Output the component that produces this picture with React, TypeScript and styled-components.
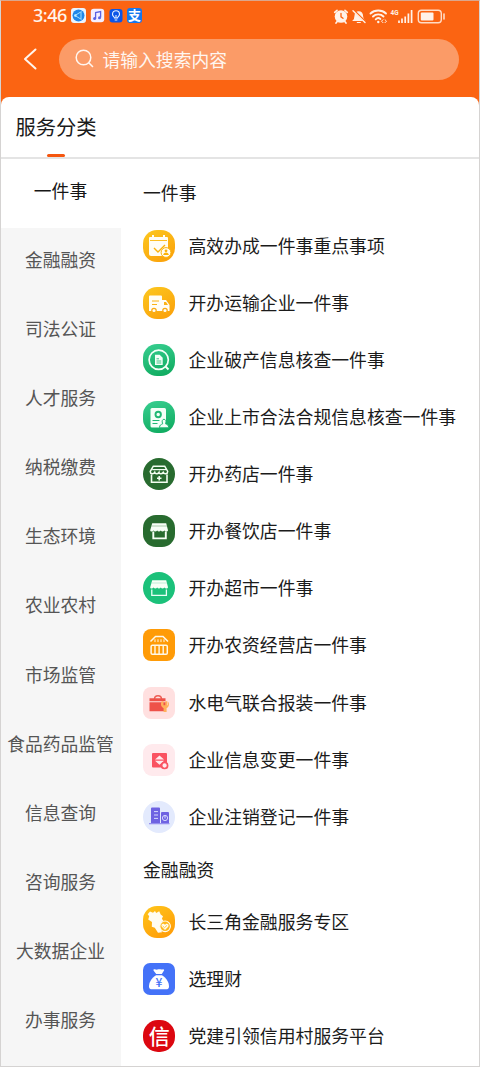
import React from 'react';
import styled, { createGlobalStyle } from 'styled-components';

const GlobalStyle = createGlobalStyle`
  *, *::before, *::after { box-sizing: border-box; }
  body { margin: 0; background: #fff; }
`;

const Screen = styled.div`
  width: 480px;
  height: 1067px;
  overflow: hidden;
  display: flex;
  flex-direction: column;
  background: #fb6412;
  border: 1px solid #d5d3d2;
  border-top-color: #dba68c;
  font-family: 'Noto Sans CJK SC', 'Noto Sans', sans-serif;
  color: #1b1b1b;
`;

const StatusBar = styled.header`
  display: flex;
  align-items: center;
  height: 29px;
  padding: 0 33px 0 31px;
`;

const Clock = styled.span`
  width: 39px;
  padding-left: 1px;
  font: 500 18px/28px 'Noto Sans', sans-serif;
  letter-spacing: -0.5px;
  color: #fff4ec;
  position: relative;
  top: -1px;
`;

const AppBadges = styled.div`
  display: flex;
  gap: 4px;
`;

const Signals = styled.div`
  margin-left: auto;
  display: flex;
  align-items: center;
`;

const SearchRow = styled.div`
  display: flex;
  align-items: center;
  height: 67px;
  padding: 0 20px 9px 22px;
`;

const BackButton = styled.button`
  width: 36px;
  height: 40px;
  padding: 0;
  border: 0;
  background: none;
  display: flex;
  align-items: center;
`;

const SearchBox = styled.div`
  flex: 1;
  height: 41px;
  border-radius: 21px;
  background: #fb9b67;
  display: flex;
  align-items: center;
  gap: 9px;
  padding: 0 0 1px 15.5px;
  font-size: 17.8px;
  line-height: 38px;
  color: #fff6f0;
`;

const Sheet = styled.main`
  flex: 1;
  min-height: 0;
  display: flex;
  flex-direction: column;
  background: #fff;
  border-radius: 8px 8px 0 0;
  overflow: hidden;
`;

const TabBar = styled.div`
  flex: none;
  height: 62px;
  padding: 14px 14px 0;
  border-bottom: 2px solid #e4e4e4;
`;

const Tab = styled.div`
  width: 82px;
  height: 46px;
  display: flex;
  flex-direction: column;
  align-items: center;
  justify-content: space-between;
  white-space: nowrap;
  font-size: 20.3px;
  line-height: 30px;
  color: #1a1a1a;

  &::after {
    content: '';
    width: 18px;
    height: 3px;
    border-radius: 2px;
    background: #f5560f;
  }
`;

const Columns = styled.div`
  flex: 1;
  min-height: 0;
  display: flex;
`;

const Sidebar = styled.nav`
  flex: none;
  width: 120px;
  background: #f6f6f6;
`;

const Category = styled.div<{ $active?: boolean }>`
  height: 69.15px;
  display: flex;
  align-items: center;
  justify-content: center;
  white-space: nowrap;
  padding: 0 1px 8px 0;
  font-size: 17.8px;
  background: ${p => (p.$active ? '#fff' : 'transparent')};
  color: ${p => (p.$active ? '#161616' : '#555')};
`;

const Services = styled.section`
  flex: 1;
  padding-left: 22px;
  overflow: hidden;
`;

const GroupTitle = styled.h2<{ $first?: boolean }>`
  margin: 0;
  height: ${p => (p.$first ? 58 : 48)}px;
  padding-top: ${p => (p.$first ? 19 : 10)}px;
  font-size: 17.85px;
  font-weight: 400;
  line-height: 28px;
`;

const ServiceRow = styled.div`
  height: 57.13px;
  display: flex;
  align-items: center;
  gap: 13.5px;
  white-space: nowrap;
  font-size: 17.85px;
  line-height: 28px;
`;

const ServiceName = styled.span`
  padding-bottom: 2px;
`;

const Tile = styled.svg`
  flex: none;
  display: block;
  width: 32px;
  height: 32px;
  overflow: visible;
`;

const Gradients = styled.svg`
  position: absolute;
  width: 0;
  height: 0;
`;

type TileProps = { fill: string; r: number; children: React.ReactNode };
const IconTile = ({ fill, r, children }: TileProps) => (
  <Tile viewBox="0 0 32 32" fill="none">
    <rect width="32" height="32" rx={r} fill={fill} />
    {children}
  </Tile>
);

const CalendarIcon = () => (
  <IconTile fill="url(#gold)" r={14}>
    <path d="M7 7h17a1 1 0 0 1 1 1v17a1 1 0 0 1-1 1H8a2 2 0 0 1-2-2V8a1 1 0 0 1 1-1z" fill="#fffdf5" />
    <path d="M10 5v4M21 5v4" stroke="#fffdf5" strokeWidth="2" />
    <path d="M7 10.5h17" stroke="#fdbf24" strokeWidth="1" />
    <path d="m11 18 4 4 7-7" stroke="#fbb20b" strokeWidth="1.4" />
    <circle cx="23" cy="22.5" r="4.9" fill="#fffdf5" stroke="#fbb20b" />
    <circle cx="23" cy="20.8" r="1.4" fill="#fbb20b" />
    <path d="M20.2 25c0-3.5 5.6-3.5 5.6 0z" fill="#fbb20b" />
  </IconTile>
);

const TruckIcon = () => (
  <IconTile fill="url(#gold)" r={14}>
    <path d="M7 8.500h11a1 1 0 0 1 1 1V13h4l3.500 5v6H6V9.500a1 1 0 0 1 1-1z" fill="#fffdf5" />
    <path d="M9 14h7M9 17.500h5" stroke="#fbb216" strokeWidth="1" />
    <path d="M21 15h2l2 3h-4z" fill="#fbb216" />
    <circle cx="11" cy="23.500" r="2.200" fill="#fffdf5" stroke="#fbaa10" strokeWidth="1.200" />
    <circle cx="22" cy="23.500" r="2.200" fill="#fffdf5" stroke="#fbaa10" strokeWidth="1.200" />
  </IconTile>
);

const AuditIcon = () => (
  <IconTile fill="url(#mint)" r={14}>
    <circle cx="15.7" cy="15.8" r="9.6" stroke="#f4fff8" strokeWidth="1.7" />
    <path d="m22.5 22.5 3 3" stroke="#f4fff8" strokeWidth="2" />
    <path d="M12 10.7h4.7l3 3V21H12z" fill="#f4fff8" />
    <path d="M13.5 14.8h2.5M13.5 17h4.8M13.5 19h4.8" stroke="#26bd79" strokeWidth="0.9" />
  </IconTile>
);

const ListingIcon = () => (
  <IconTile fill="url(#mint)" r={14}>
    <rect x="7.500" y="7" width="15.500" height="19.500" rx="1.500" fill="#f4fff8" />
    <circle cx="15.200" cy="13.500" r="2.700" stroke="#20b874" strokeWidth="1.900" />
    <path d="M9.500 19.500h7M9.500 22.500h5" stroke="#20b874" strokeWidth="1.100" />
    <path d="M16.500 26.800c0-3 1.700-3.300 3.200-4-2.700-6 5.300-6 2.800 0 1.500.7 3.200 1 3.200 4z" fill="#f4fff8" stroke="#20b874" />
  </IconTile>
);

const PharmacyIcon = () => (
  <IconTile fill="#286b2f" r={16}>
    <path d="M10.300 8.200h11.400l3 5.300c0 2.700-3.500 3-4.500.8-1.300 2-4 2-4.200 0-1.300 2-3.800 2-4.300 0-1.200 2.100-4.500 1.800-4.500-.8z" stroke="#f4fff2" strokeWidth="1.500" />
    <path d="M9.200 11.600h14" stroke="#f4fff2" strokeWidth="1.200" />
    <path d="M8.500 16.500v7.800H24v-7.800" stroke="#f4fff2" strokeWidth="1.600" />
    <path d="M16.200 18v4.500M14 20.200h4.500" stroke="#f4fff2" strokeWidth="1.500" />
  </IconTile>
);

const Shop = ({ cut }: { cut: string }) => (
  <>
    <path d="M9.200 8.200h14l1.800 7c0 1.600-2.600 2-3.600.4-1 1.300-2.800 1.300-3.600 0-1 1.300-2.800 1.300-3.600 0-1 1.300-2.800 1.300-3.600 0-1.200 1.600-3.500 1.200-3.400-.4z" fill="#f7fff7" />
    <path d="M8.300 11h15.800" stroke={cut} strokeWidth="0.6" />
  </>
);

const RestaurantIcon = () => (
  <IconTile fill="#286b2f" r={13}>
    <Shop cut="#77a67b" />
    <path d="M10.300 16.500v6.900h12.500v-6.900" stroke="#f7fff7" strokeWidth="1.900" />
  </IconTile>
);

const MarketIcon = () => (
  <IconTile fill="#1bc17a" r={16}>
    <Shop cut="#9ce3c3" />
    <path d="M8.800 17.500v5.900h14.600v-5.900" stroke="#eafff5" strokeWidth="1.300" />
  </IconTile>
);

const FarmStoreIcon = () => (
  <IconTile fill="#ff9b07" r={8}>
    <path d="m7.500 12.500 5-5h7.500l5 5" stroke="#fff8e8" strokeWidth="1.500" />
    <path d="M12 10.300v2.800M15 10.300v2.800M18 10.300v2.800M21 10.300v2.800" stroke="#fff8e8" strokeWidth="1" />
    <rect x="8.100" y="16.300" width="16.200" height="9" rx="1.300" stroke="#fff8e8" strokeWidth="1.500" />
    <path d="M12 17v8M16.100 17v8M20.200 17v8" stroke="#fff8e8" strokeWidth="1.400" />
  </IconTile>
);

const UtilityIcon = () => (
  <IconTile fill="#ffe0e0" r={8}>
    <path d="M11.500 12c0-4.400 7-4.400 7 0" stroke="#ee5d53" strokeWidth="1.400" />
    <path d="M6.500 11.300h16v3h-16zM6.500 15.200H23v9H6.500z" fill="#ee5149" />
    <path d="M18.800 14.200h1.700v4h1.800v-4h1.800v4h.600l-.1-4c2 1.500 2 5.500-1 7V25h-3v-3.800c-2.800-1.500-3.300-5-1.800-7z" fill="#ffb05b" />
  </IconTile>
);

const ChangeIcon = () => (
  <IconTile fill="#ffeaed" r={9}>
    <rect x="9" y="9" width="15" height="14.500" rx="1" fill="#fa5361" />
    <path d="m12 15.600 4.500-4.200 4.500 4.200zM12 16.800l4.500 4 4.500-4z" fill="#ffeaed" />
    <circle cx="21.600" cy="21.500" r="3" fill="#ffeaed" stroke="#fa5361" strokeWidth="1.700" />
  </IconTile>
);

const CancelIcon = () => (
  <IconTile fill="#e3eafd" r={16}>
    <path d="M8 7.500a1 1 0 0 1 1-1h7a1 1 0 0 1 1 1v14.700H8zM18 12a1 1 0 0 1 1-1h6a1 1 0 0 1 1 1v10.200h-8z" fill="#6e62e2" />
    <path d="M6 22.700h20.500" stroke="#8c83ec" strokeWidth="1.100" />
    <path d="M11 10.600h4M11 14h4M11 17.400h4" stroke="#d7dafd" strokeWidth="1" />
    <circle cx="22" cy="17" r="2.600" stroke="#d7dafd" strokeWidth="1" />
    <path d="M22 14v3.500" stroke="#d7dafd" strokeWidth="1" />
  </IconTile>
);

const RegionIcon = () => (
  <IconTile fill="url(#amber)" r={14}>
    <path d="m7 5.400 3 1.400 2-1.900 1.200 2 3-1.700 1.500 3.200 2.300 1.800-1.100 2.500 1.400 2-2.100 1.500-.7 5.600 1.500 4.400-4 .5-3.200-4.900-3-1.100.2-4.600-3.800-2.600 1-3.200-1.500-2z" fill="#fffcf1" />
    <circle cx="22.100" cy="20.300" r="5.300" fill="#ffb91c" stroke="#fffcf1" strokeWidth="1.100" />
    <path d="m22 23.900-3.200-3.200c-1.500-2.500 2-4.300 3.200-1.700 1.200-2.600 4.800-.8 3.200 1.700z" fill="#fffcf1" />
    <path d="m19.700 20 1.800 1.700 2.700-2.500" stroke="#ffb91c" strokeWidth=".8" />
  </IconTile>
);

const MoneyBagIcon = () => (
  <IconTile fill="#4472f8" r={7}>
    <path d="M10.500 6.600c1.500-1 2.700.5 4 0 1.700-1.100 3.500.3 5.500-.4.900-.1 1.500.7 1 1.400L18.800 11h-5.600l-2.700-3.500z" fill="#fff" />
    <path d="M13 12.200h6c5 3.300 7 7.400 7 11.300 0 2.100-1.200 2.800-3.100 2.800H9.100C7.200 26.300 6 25.600 6 23.500c0-3.900 2-8 7-11.300z" fill="#fff" />
    <text x="16" y="24.300" textAnchor="middle" fontSize="12" fontWeight="500" fontFamily="Noto Sans CJK SC, sans-serif" fill="#4472f8">¥</text>
  </IconTile>
);

const CreditIcon = () => (
  <IconTile fill="#dc0710" r={15}>
    <text x="16.200" y="23.700" textAnchor="middle" fontSize="21" fontWeight="500" fontFamily="Noto Sans CJK SC, sans-serif" fill="#fff">信</text>
  </IconTile>
);

const categories = [
  '一件事', '金融融资', '司法公证', '人才服务', '纳税缴费', '生态环境', '农业农村',
  '市场监管', '食品药品监管', '信息查询', '咨询服务', '大数据企业', '办事服务',
];

const groups = [
  {
    title: '一件事',
    items: [
      { name: '高效办成一件事重点事项', Icon: CalendarIcon },
      { name: '开办运输企业一件事', Icon: TruckIcon },
      { name: '企业破产信息核查一件事', Icon: AuditIcon },
      { name: '企业上市合法合规信息核查一件事', Icon: ListingIcon },
      { name: '开办药店一件事', Icon: PharmacyIcon },
      { name: '开办餐饮店一件事', Icon: RestaurantIcon },
      { name: '开办超市一件事', Icon: MarketIcon },
      { name: '开办农资经营店一件事', Icon: FarmStoreIcon },
      { name: '水电气联合报装一件事', Icon: UtilityIcon },
      { name: '企业信息变更一件事', Icon: ChangeIcon },
      { name: '企业注销登记一件事', Icon: CancelIcon },
    ],
  },
  {
    title: '金融融资',
    items: [
      { name: '长三角金融服务专区', Icon: RegionIcon },
      { name: '选理财', Icon: MoneyBagIcon },
      { name: '党建引领信用村服务平台', Icon: CreditIcon },
    ],
  },
];

const BadgeIcon = styled.svg`
  display: block;
  overflow: visible;
`;

const StatusApps = () => (
  <AppBadges>
    <BadgeIcon width="15" height="15" viewBox="0 0 15 15" fill="none">
      <rect width="15" height="15" rx="3" fill="#e9f4ff" />
      <circle cx="7.500" cy="7.500" r="6" fill="#2187e8" />
      <path d="M10.500 3.500 4 7.500l6.500 4M10 4v7" stroke="#9fe0ff" strokeWidth="1" />
      <circle cx="4.300" cy="7.500" r="1.200" fill="#c5efff" />
    </BadgeIcon>
    <BadgeIcon width="15" height="15" viewBox="0 0 15 15" fill="none">
      <rect x=".8" y=".8" width="13.400" height="13.400" rx="3" fill="#f5efff" />
      <path d="M5.600 10.500V4.500l5-1v6" stroke="#5a62e4" strokeWidth="1.300" />
      <circle cx="4.600" cy="10.600" r="1.500" fill="#5a62e4" />
      <circle cx="9.500" cy="9.700" r="1.500" fill="#5a62e4" />
    </BadgeIcon>
    <BadgeIcon width="14" height="15" viewBox="0 0 14 15" fill="none">
      <rect x=".5" y="1" width="13" height="13.500" rx="3" fill="#0b55e8" />
      <path d="M5.500 10c0-1.300-2-1.700-2-3.800a3.500 3.500 0 0 1 7 0c0 2.100-2 2.500-2 3.800zM5.700 12h2.600M7 9.500V7" stroke="#e8f3ff" strokeWidth="1.100" />
    </BadgeIcon>
    <BadgeIcon width="15" height="15" viewBox="0 0 15 15">
      <rect width="15" height="15" rx="3" fill="#1478ee" />
      <text x="7.500" y="12.200" textAnchor="middle" fontSize="13" fontWeight="700" fontFamily="Noto Sans CJK SC, sans-serif" fill="#fff">支</text>
    </BadgeIcon>
  </AppBadges>
);

const StatusSignals = () => (
  <Signals>
    <svg width="113" height="18" viewBox="0 0 113 18" fill="none">
      <g stroke="#fff2e9" strokeLinecap="round">
        <circle cx="8" cy="9.500" r="6.300" fill="#fff2e9" stroke="none" />
        <path d="M1.700 5.300 4 3.300M12 3.300l2.300 2M4.200 14.500 3 16M11.800 14.500 13 16" strokeWidth="1.700" />
        <path d="M8 6.300v3.500l2 1.500" stroke="#fb6412" strokeWidth="1.300" />
        <path d="M20.700 13.300c2-1.800.6-5.600 2.300-7.300 1.400-1.500 4.100-1.500 5.500 0 1.700 1.700.3 5.500 2.400 7.300zM24.300 15.500h3" fill="#fff2e9" strokeWidth="1.200" />
        <path d="m20.500 3.300 12 11.800" stroke="#fb6412" strokeWidth="2.200" />
        <path d="m20 3.800 12 11.800" strokeWidth="1.400" />
        <path d="M37.500 6.500c4-4 11.500-4 15.500 0M40 9.500c2.800-2.800 7.700-2.800 10.500 0M42.700 12.300c1.500-1.500 3.200-1.500 4.700-.3" strokeWidth="1.900" />
        <circle cx="45.300" cy="15" r="1.200" fill="#fff2e9" stroke="none" />
        <path d="m50 12.700-1.500 1.500 1.500 1.500M52 12.700l1.500 1.500-1.500 1.500" strokeWidth="1" />
      </g>
      <text x="57.500" y="8" fontSize="7.500" fontWeight="700" textLength="8" lengthAdjust="spacingAndGlyphs" fontFamily="Roboto, sans-serif" fill="#fff2e9">4G</text>
      <path d="M66 13.500v2.500M69 11.500V16M72.200 9.500V16M75.400 6.500V16M78.600 3V16" stroke="#fff2e9" strokeWidth="1.700" />
      <rect x="85.300" y="3.300" width="23" height="12.400" rx="3.200" stroke="#ffdcc6" strokeWidth="1.400" />
      <rect x="87.800" y="5.500" width="12.700" height="8" rx="1" fill="#fff2e9" />
      <path d="M111 7v5" stroke="#ffdcc6" strokeWidth="1.600" strokeLinecap="round" />
    </svg>
  </Signals>
);

export default function App() {
  return (
    <Screen>
      <GlobalStyle />
      <Gradients>
        <defs>
          <linearGradient id="gold" x1="0" y1="0" x2="0.6" y2="1">
            <stop stopColor="#fcc81f" /><stop offset="1" stopColor="#fba40c" />
          </linearGradient>
          <linearGradient id="amber" x1="0" y1="0" x2="0.6" y2="1">
            <stop stopColor="#ffc61b" /><stop offset="1" stopColor="#ff9f09" />
          </linearGradient>
          <linearGradient id="mint" x1="0.3" y1="0" x2="0.6" y2="1">
            <stop stopColor="#35cc8d" /><stop offset="1" stopColor="#11ac61" />
          </linearGradient>
        </defs>
      </Gradients>
      <StatusBar>
        <Clock>3:46</Clock>
        <StatusApps />
        <StatusSignals />
      </StatusBar>
      <SearchRow>
        <BackButton aria-label="返回">
          <svg width="14" height="22" viewBox="0 0 14 22" fill="none">
            <path d="M12.500 1.500 2 11l10.500 9.500" stroke="#fff5ed" strokeWidth="2" strokeLinecap="round" strokeLinejoin="round" />
          </svg>
        </BackButton>
        <SearchBox>
          <svg width="19" height="19" viewBox="0 0 19 19" fill="none">
            <circle cx="8.500" cy="8.500" r="7.300" stroke="#fff6f0" strokeWidth="1.500" />
            <path d="m14 14 3.500 3.500" stroke="#fff6f0" strokeWidth="1.600" strokeLinecap="round" />
          </svg>
          请输入搜索内容
        </SearchBox>
      </SearchRow>
      <Sheet>
        <TabBar>
          <Tab>服务分类</Tab>
        </TabBar>
        <Columns>
          <Sidebar>
            {categories.map((name, i) => (
              <Category key={name} $active={i === 0}>{name}</Category>
            ))}
          </Sidebar>
          <Services>
            {groups.map((group, i) => (
              <React.Fragment key={group.title}>
                <GroupTitle $first={i === 0}>{group.title}</GroupTitle>
                {group.items.map(({ name, Icon }) => (
                  <ServiceRow key={name}>
                    <Icon />
                    <ServiceName>{name}</ServiceName>
                  </ServiceRow>
                ))}
              </React.Fragment>
            ))}
          </Services>
        </Columns>
      </Sheet>
    </Screen>
  );
}
